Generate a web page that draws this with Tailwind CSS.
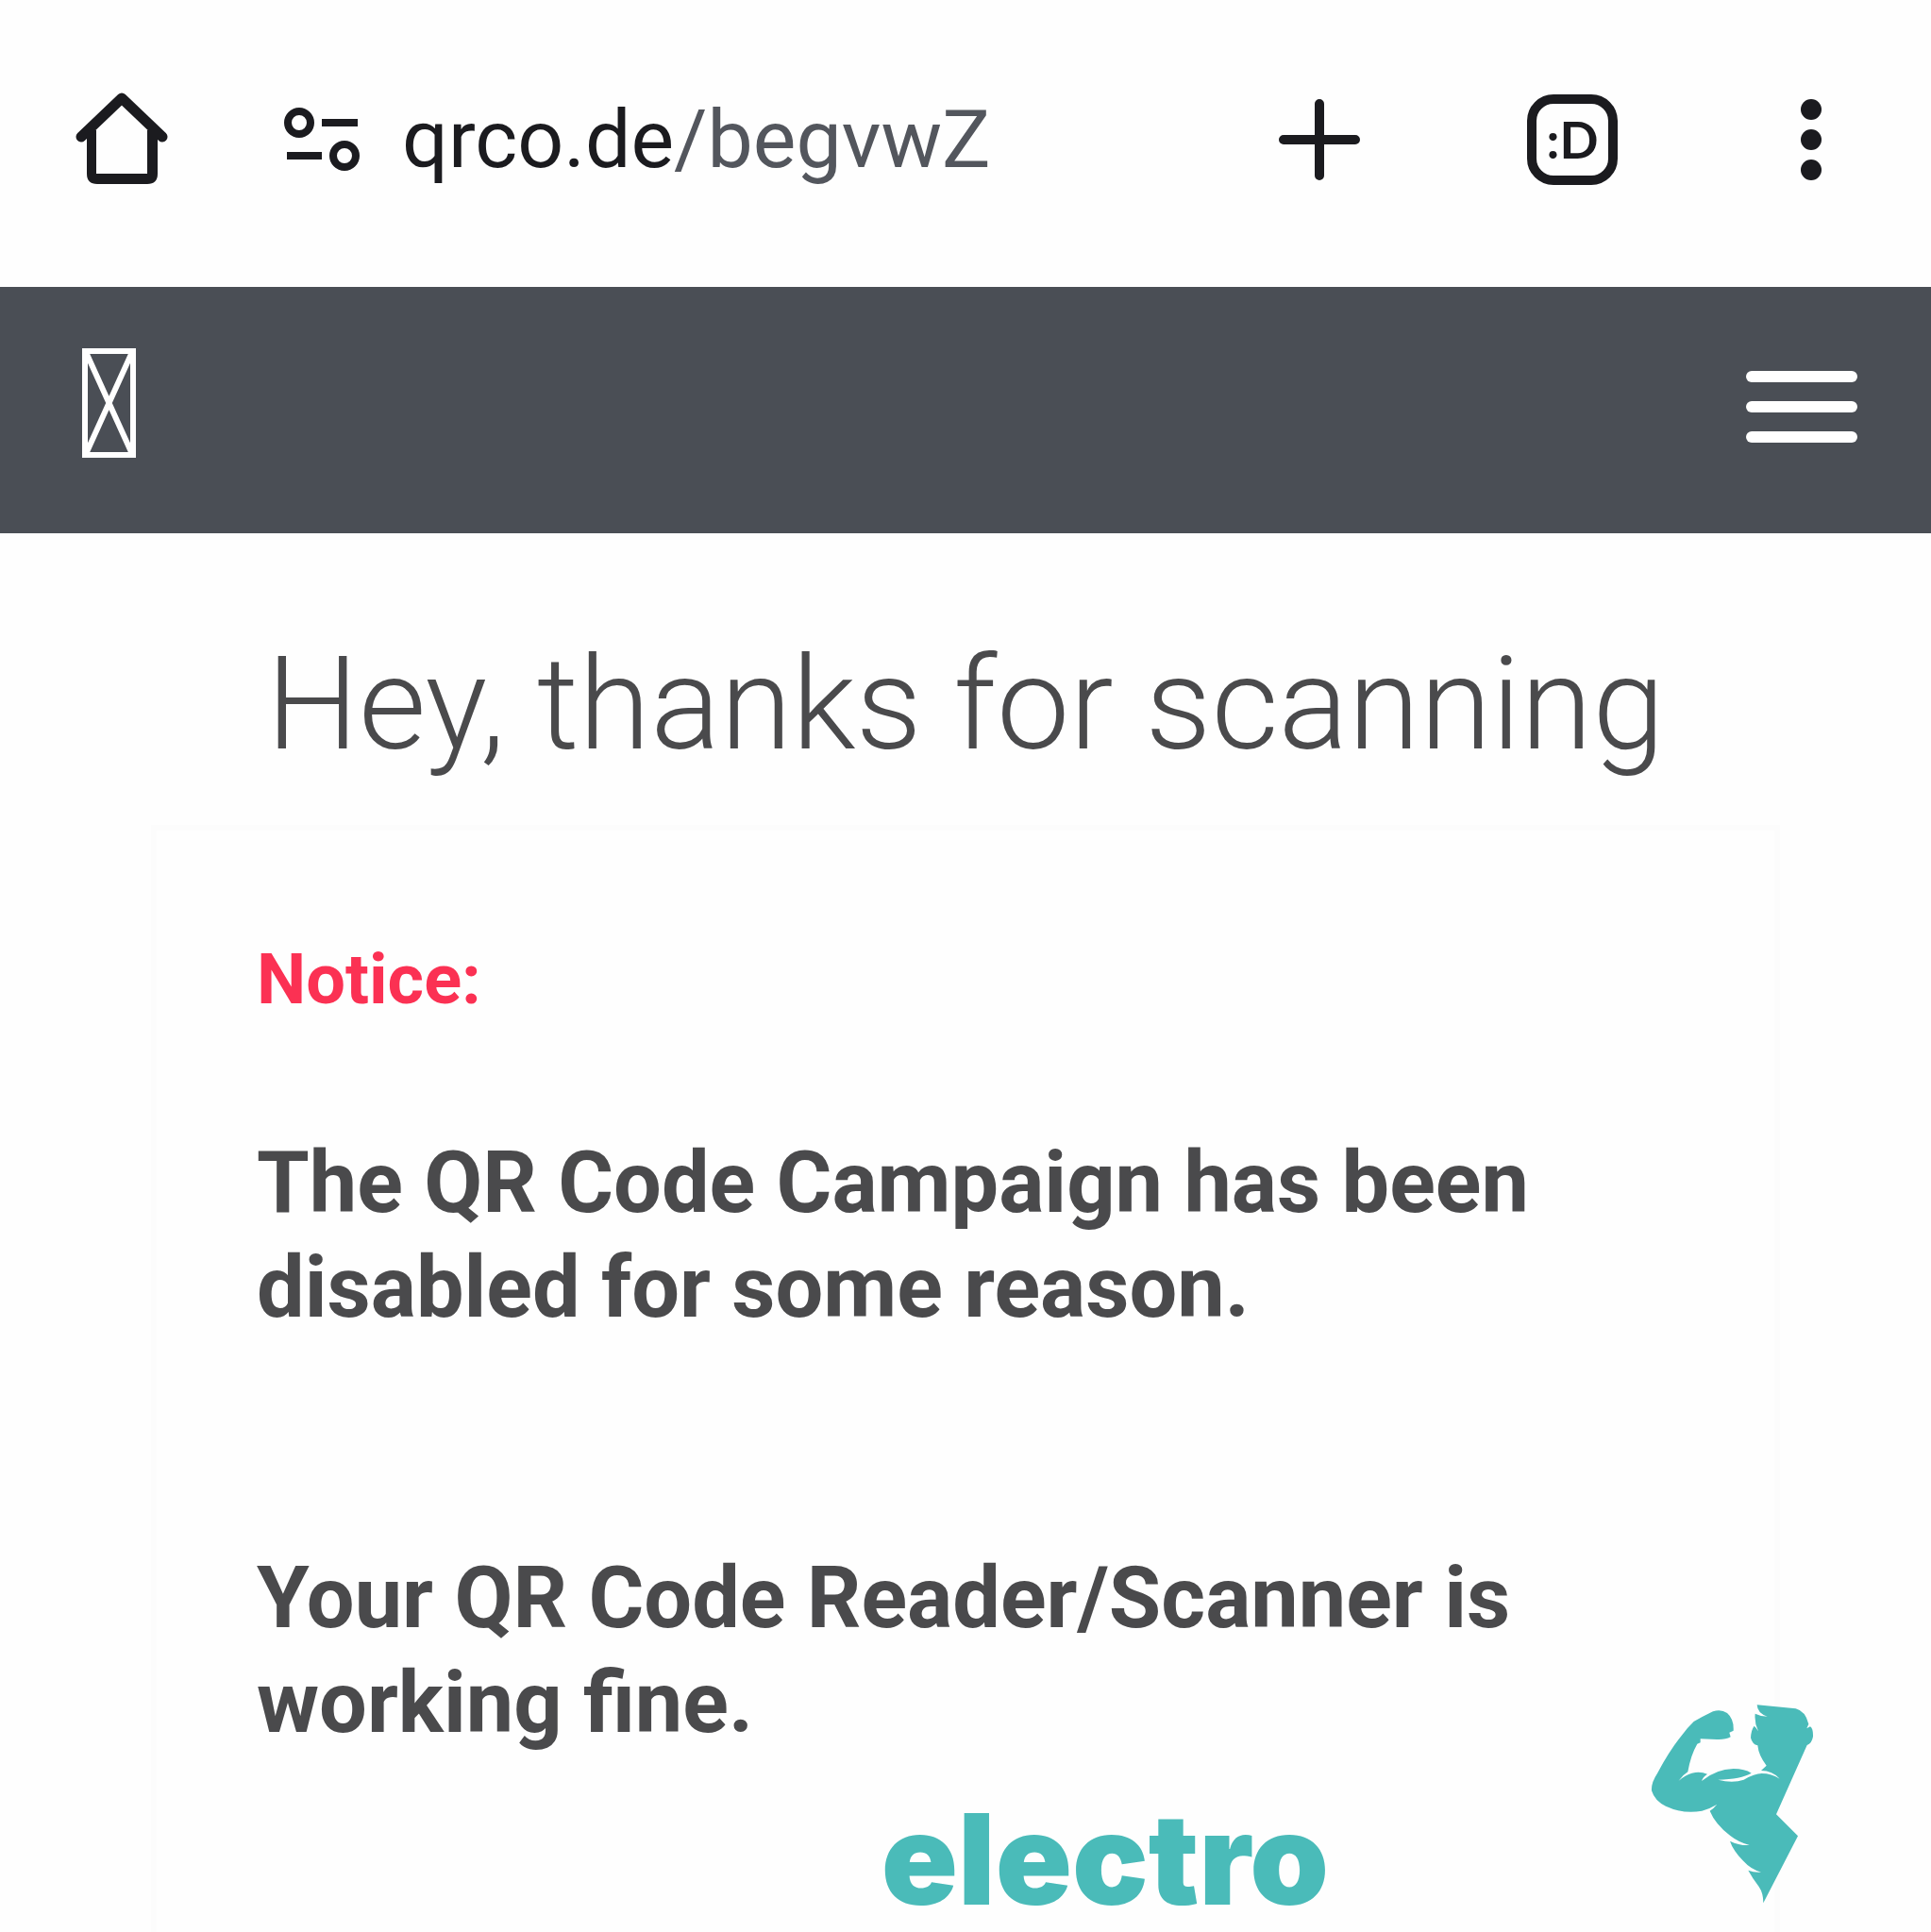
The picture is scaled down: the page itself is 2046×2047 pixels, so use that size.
<!DOCTYPE html>
<html lang="en">
  <head>
    <meta charset="UTF-8" />
    <meta name="viewport" content="width=device-width, initial-scale=1.0" />
    <title>QR Code Campaign</title>
    <script src="https://cdn.jsdelivr.net/npm/@tailwindcss/browser@4"></script>
  </head>
  <body class="bg-[#fefefe] font-[Roboto,sans-serif]">
    <div class="relative flex min-h-screen flex-col overflow-hidden">
      <!-- browser bar -->
      <div class="flex h-[304px] items-start justify-between px-[80px] pt-[92px] text-[#1b1b1f]">
        <div class="flex items-center">
          <button type="button" aria-label="Home">
            <svg class="h-28 w-[98px]" viewBox="0 0 98 112" fill="none">
              <path d="M6 53L49 12L92 53" stroke="currentColor" stroke-width="11" stroke-linecap="round" stroke-linejoin="round" />
              <path d="M12 46H22V92H76V46H87V92Q87 103 76 103H23Q12 103 12 92Z" fill="currentColor" />
            </svg>
          </button>
          <button type="button" aria-label="Site settings" class="ml-[120px]">
            <svg class="h-28 w-[88px]" viewBox="0 0 88 112" fill="none" stroke="currentColor">
              <circle cx="19" cy="38" r="12" stroke-width="8" />
              <path d="M43 38H81M6 73H43" stroke-width="8" />
              <circle cx="67" cy="73" r="12" stroke-width="8" />
            </svg>
          </button>
          <a href="#" class="ml-10 text-[86px] leading-28">qrco.de<span class="text-[#53565d]">/begvwZ</span></a>
        </div>
        <div class="flex items-center pr-4">
          <button type="button" aria-label="New tab">
            <svg class="h-28 w-[88px]" viewBox="0 0 88 112" fill="none">
              <path d="M6 56H82M44 18V94" stroke="currentColor" stroke-width="10" stroke-linecap="round" />
            </svg>
          </button>
          <button type="button" aria-label="Tabs" class="ml-44 flex h-24 w-24 items-center justify-center rounded-[28px] border-[10px] border-current font-[Lato,sans-serif] text-[54px] leading-none font-bold">
            :D
          </button>
          <button type="button" aria-label="More" class="ml-[174px]">
            <svg class="h-28 w-[62px]" viewBox="0 0 62 112" fill="currentColor">
              <circle cx="31" cy="24" r="11" />
              <circle cx="31" cy="56" r="11" />
              <circle cx="31" cy="88" r="11" />
            </svg>
          </button>
        </div>
      </div>

      <!-- site header -->
      <header class="flex h-[261px] items-start justify-between bg-[#4a4e55] px-[78px] pt-[64px] text-white">
        <a href="#" aria-label="Logo" class="ml-2">
          <svg class="h-[118px] w-[58px]" viewBox="0 0 58 118" fill="none" stroke="currentColor">
            <path d="M4 4H55V114H4Z" stroke-width="6" />
            <path d="M5 5L54 113M54 5L5 113" stroke-width="6" />
          </svg>
        </a>
        <button type="button" aria-label="Menu" class="mt-[25px] flex flex-col gap-5">
          <span class="h-3 w-[118px] rounded-full bg-white"></span>
          <span class="h-3 w-[118px] rounded-full bg-white"></span>
          <span class="h-3 w-[118px] rounded-full bg-white"></span>
        </button>
      </header>

      <main class="flex flex-1 flex-col px-[160px] text-[#4a4a4c]">
        <h1 class="mt-[101px] text-center text-[138px] leading-[160px] font-light whitespace-nowrap">Hey, thanks for scanning</h1>
        <section class="mt-12 flex-1 border-[6px] border-b-0 border-[#fcfcfc] px-[106px] pt-[110px]">
          <h2 class="text-[74px] leading-[96px] font-bold text-[#fb3153]">Notice:</h2>
          <p class="mt-[112px] text-[90px] leading-[111px] font-bold">
            The QR Code Campaign has been<br />disabled for some reason.
          </p>
          <p class="mt-[218px] text-[90px] leading-[111px] font-bold">
            Your QR Code Reader/Scanner is<br />working fine.
          </p>
        </section>
      </main>

      <!-- watermark -->
      <div class="absolute right-24 bottom-2 flex items-end text-[#4abbb9]">
        <span class="mr-[312px] font-[Inter,sans-serif] text-[134px] leading-[140px] font-black">electro</span>
        <svg class="h-[260px] w-[230px]" viewBox="0 0 690 780" fill="currentColor">
          <path d="M425 82L548 94Q579 102 589 143L583 157L594 151Q604 158 603 183Q599 205 584 210L486 430L555 499L445 712Q445 680 431 660Q410 632 397 608Q417 616 438 614Q405 605 380 577Q348 543 339 515Q370 530 401 528Q365 518 340 498Q292 461 275 419Q288 411 297 399Q278 411 250 419Q190 430 135 404Q100 388 90 355Q88 330 108 300Q145 230 185 180Q204 154 224 135Q250 120 285 103Q310 94 330 108Q352 127 350 164L337 170L341 184Q325 193 298 192L245 190V202L235 206Q214 242 205 295Q188 306 176 323Q197 305 218 299Q245 293 267 302Q252 312 249 324Q295 286 350 285Q386 285 407 299Q374 318 301 320Q347 332 383 320Q417 300 440 300Q472 300 497 317Q474 291 438 291L455 275Q430 243 427 211Q410 208 405 187Q406 162 416 149Q423 155 429 166Q416 138 419 110Q437 119 458 119Q426 109 425 82Z" />
        </svg>
      </div>
    </div>
  </body>
</html>
